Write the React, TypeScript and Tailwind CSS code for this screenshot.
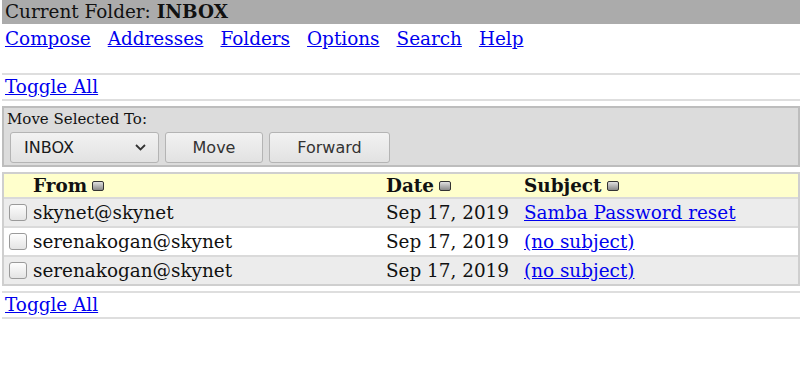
import React from 'react';

const serif = { fontFamily: '"DejaVu Serif", serif' };
const sans = { fontFamily: '"DejaVu Sans", "Noto Sans", sans-serif' };

const links = ['Compose', 'Addresses', 'Folders', 'Options', 'Search', 'Help'];

const messages = [
  { from: 'skynet@skynet', date: 'Sep 17, 2019', subject: 'Samba Password reset', shade: true },
  { from: 'serenakogan@skynet', date: 'Sep 17, 2019', subject: '(no subject)', shade: false },
  { from: 'serenakogan@skynet', date: 'Sep 17, 2019', subject: '(no subject)', shade: true },
];

const SortIcon = () => (
  <span className="inline-block w-[12px] h-[10px] ml-[5px] rounded-[2px] border border-[#333] bg-gradient-to-b from-[#e0e0e0] to-[#8a8a8a]" />
);

const Check = () => (
  <span className="inline-block w-[18px] h-[17px] rounded-[3px] border border-[#9a9a9a] bg-gradient-to-b from-[#fdfdfd] to-[#e4e4e4] shrink-0" />
);

const ToggleBox = () => (
  <div className="ml-[2px] border-y-2 border-[#dedede] h-[28px] flex items-center pl-[3px]">
    <a href="#" className="text-[#0000ee] underline text-[18.4px] leading-none">Toggle All</a>
  </div>
);

const Btn = ({ label, w }: { label: string; w: string }) => (
  <button
    className={`${w} h-[31px] rounded-[3px] border border-[#b4b4b4] bg-gradient-to-b from-[#f2f2f2] to-[#e2e2e2] text-[#333] text-[16px] flex items-center justify-center`}
    style={sans}
  >
    {label}
  </button>
);

export default function App() {
  return (
    <div className="w-[800px] h-[381px] bg-white text-black overflow-hidden text-[18.4px]" style={serif}>
      <div className="ml-[2px] h-[24px] bg-[#ababab] flex items-center pl-[3px] text-[#111]">
        Current Folder:&nbsp;<b>INBOX</b>
      </div>
      <div className="flex gap-[17px] pl-[5px] h-[26px] pt-[4px] items-center">
        {links.map(l => (
          <a key={l} href="#" className="text-[#0000ee] underline leading-none">{l}</a>
        ))}
      </div>
      <div className="h-[23px]" />
      <ToggleBox />
      <div className="h-[5px]" />
      <div className="ml-[2px] border-2 border-[#bdbdbd] bg-[#dcdcdc] h-[61px] pl-[3px] pt-[2px]">
        <div className="text-[15px] leading-[18px] text-[#111]">Move Selected To:</div>
        <div className="flex gap-[6px] mt-[4px] pl-[3px]">
          <div
            className="w-[149px] h-[31px] rounded-[3px] border border-[#b4b4b4] bg-gradient-to-b from-[#f2f2f2] to-[#e2e2e2] text-[#1a1a1a] text-[16px] flex items-center justify-between pl-[13px] pr-[12px]"
            style={sans}
          >
            <span>INBOX</span>
            <svg width="11" height="7" viewBox="0 0 11 7">
              <path d="M1 1l4.5 4.5L10 1" stroke="#333" strokeWidth="1.8" fill="none" />
            </svg>
          </div>
          <Btn label="Move" w="w-[98px]" />
          <Btn label="Forward" w="w-[121px]" />
        </div>
      </div>
      <div className="h-[5px]" />
      <div className="ml-[2px] border-2 border-[#cfcfcf]">
        <div className="flex h-[23px] items-center bg-[#ffffcc] font-bold text-[#111]">
          <div className="w-[382px] pl-[29px] flex items-center">From<SortIcon /></div>
          <div className="w-[138px] flex items-center">Date<SortIcon /></div>
          <div className="flex items-center">Subject<SortIcon /></div>
        </div>
        {messages.map((m, i) => (
          <div
            key={i}
            className={`flex h-[29px] items-center border-t-2 border-[#dadada] ${m.shade ? 'bg-[#ececec]' : 'bg-white'} text-[#111]`}
          >
            <div className="w-[382px] pl-[5px] flex items-center gap-[6px]">
              <Check />
              <span>{m.from}</span>
            </div>
            <div className="w-[138px]">{m.date}</div>
            <a href="#" className="text-[#0000ee] underline">{m.subject}</a>
          </div>
        ))}
      </div>
      <div className="h-[5px]" />
      <ToggleBox />
    </div>
  );
}
